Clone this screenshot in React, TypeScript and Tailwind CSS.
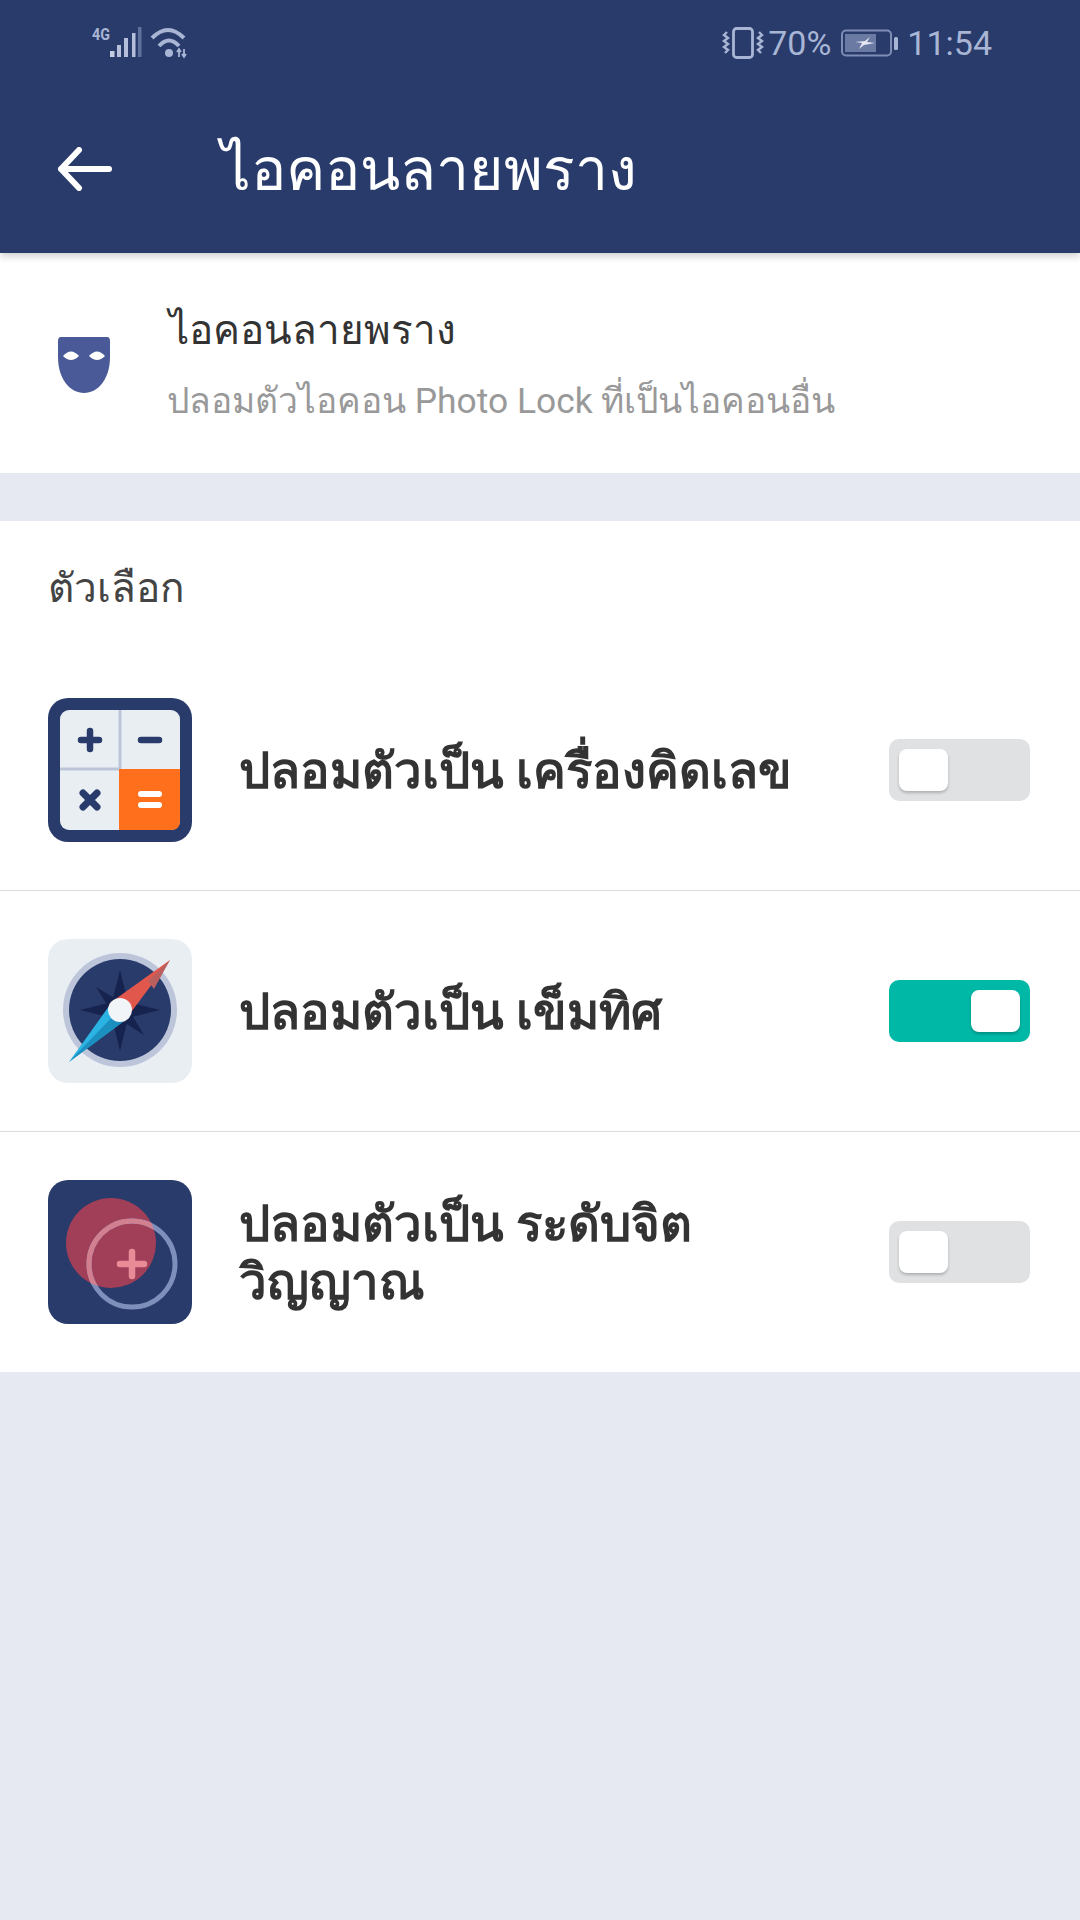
import React from "react";

const NAVY = "#283b6b";

function SignalIcon() {
  return (
    <svg width="100" height="36" viewBox="0 0 100 36" fill="none">
      <text x="0" y="15" fill="#a9b5d4" fontSize="16" fontWeight="700" fontFamily="'Liberation Sans Narrow','Roboto',sans-serif" textLength="18" lengthAdjust="spacingAndGlyphs">4G</text>
      <rect x="18" y="26" width="4.500" height="6" fill="#c3cce2" />
      <rect x="25" y="20" width="4" height="12" fill="#b5bfdb" />
      <rect x="32" y="13" width="4" height="19" fill="#b5bfdb" />
      <rect x="40" y="8" width="3.500" height="24" fill="#b5bfdb" />
      <rect x="46" y="2" width="3.500" height="30" fill="#5f709c" />
      <path d="M60 13 Q76 -3 92 13" stroke="#a9b5d4" strokeWidth="4" />
      <path d="M67 21 Q77 10 87 21" stroke="#a9b5d4" strokeWidth="4" />
      <circle cx="77" cy="28" r="4" fill="#a9b5d4" />
      <path d="M87 32V24M85 27l2-3 2 3M92 24v8M90 29l2 3 2-3" stroke="#a9b5d4" strokeWidth="1.800" />
    </svg>
  );
}

function VibrateIcon() {
  return (
    <svg width="42" height="32" viewBox="0 0 42 32" fill="none" stroke="#a9b5d4">
      <rect x="11.500" y="1.500" width="19" height="29" rx="3" strokeWidth="2.800" />
      <path d="M5 5l-3 3 4 3-4 3 4 3-4 3 4 3-3 3" strokeWidth="2.400" />
      <path d="M37 5l3 3-4 3 4 3-4 3 4 3-4 3 3 3" strokeWidth="2.400" />
    </svg>
  );
}

function BatteryIcon() {
  return (
    <svg width="58" height="28" viewBox="0 0 58 28" fill="none">
      <rect x="1" y="1.500" width="49" height="25" rx="4" stroke="#7f8db5" strokeWidth="2" />
      <rect x="4" y="5" width="31" height="18" fill="#6b7aa3" />
      <rect x="53" y="8" width="4" height="13" rx="1.500" fill="#a9b5d4" />
      <path d="M14 13l10-1 5-4-3 5 8 1-11 2-5 4 3-6z" fill="#e4e8f2" />
    </svg>
  );
}

function MaskIcon() {
  return (
    <svg width="54" height="56" viewBox="0 0 54 56" className="mt-[4px]">
      <path d="M4 0H50Q53 0 53 4V20C53 42 41 56 27 56C13 56 1 42 1 20V4Q1 0 4 0Z" fill="#4a5a99" />
      <path d="M6 19Q14 10 22 19Q14 27 6 19Z" fill="#fff" />
      <path d="M32 19Q40 10 48 19Q40 27 32 19Z" fill="#fff" />
    </svg>
  );
}

function CalculatorIcon() {
  return (
    <svg width="144" height="144" viewBox="0 0 144 144" fill="none">
      <rect width="144" height="144" rx="20" fill={NAVY} />
      <rect x="12" y="12" width="120" height="120" rx="9" fill="#e9eef3" />
      <path d="M71 71H132V123Q132 132 123 132H71Z" fill="#ff6f1c" />
      <path d="M72 12V71M12 71H71" stroke="#bcc5d8" strokeWidth="3" />
      <g stroke={NAVY} strokeLinecap="round" strokeWidth="6.500">
        <path d="M33 42H51M42 33V51M93 42H111" />
        <path d="M35 95L49 109M49 95L35 109" strokeWidth="7" />
      </g>
      <path d="M93 96H111M93 107H111" stroke="#fff" strokeLinecap="round" strokeWidth="6" />
    </svg>
  );
}

function CompassIcon() {
  return (
    <svg width="144" height="144" viewBox="0 0 144 144">
      <rect width="144" height="144" rx="20" fill="#e9eef3" />
      <circle cx="72" cy="71" r="57" fill="#bcc5da" />
      <circle cx="72" cy="71" r="51" fill={NAVY} />
      <path d="M72 31L80 63L112 71L80 79L72 112L64 79L32 71L64 63Z" fill="#17234f" />
      <path d="M48 48L78 66L96 96L66 77Z" fill="#17234f" />
      <path d="M122 21L78 80L62 64Z" fill="#e2574c" />
      <path d="M122 21L100 42L106 50Z" fill="#b9605f" />
      <path d="M21 123L64 63L80 79Z" fill="#2bb3e3" />
      <path d="M21 123L70 72L80 79Z" fill="#1b8fbf" />
      <circle cx="72" cy="71" r="12" fill="#f2f5f8" />
    </svg>
  );
}

function SpiritIcon() {
  return (
    <svg width="144" height="144" viewBox="0 0 144 144" fill="none">
      <defs>
        <clipPath id="red-disc">
          <circle cx="63" cy="63" r="45" />
        </clipPath>
      </defs>
      <rect width="144" height="144" rx="20" fill={NAVY} />
      <circle cx="63" cy="63" r="45" fill="#a13f58" />
      <circle cx="84" cy="84" r="43" stroke="#7f8fbb" strokeWidth="5" />
      <circle cx="84" cy="84" r="43" stroke="#d27f90" strokeWidth="5" clipPath="url(#red-disc)" />
      <path d="M72 84H96M84 72V96" stroke="#e98b97" strokeWidth="6.500" strokeLinecap="round" />
    </svg>
  );
}

function Toggle({ on }: { on?: boolean }) {
  return (
    <div
      className={`flex h-[62px] w-[141px] shrink-0 items-center rounded-[10px] px-[10px] ${
        on ? "justify-end bg-[#00b8a6]" : "justify-start bg-[#e0e1e3]"
      }`}
    >
      <div className="h-[42px] w-[49px] rounded-[8px] bg-white shadow-[0_2px_3px_rgba(0,0,0,0.22)]" />
    </div>
  );
}

function OptionRow({
  icon,
  label,
  on,
  divider,
}: {
  icon: React.ReactNode;
  label: React.ReactNode;
  on?: boolean;
  divider?: boolean;
}) {
  return (
    <div className={`flex items-center py-[48px] pl-[48px] pr-[50px] ${divider ? "border-b border-[#dcdcdc]" : ""}`}>
      <div className="h-[144px] w-[144px] shrink-0">{icon}</div>
      <div className="ml-[47px] flex-1 pt-[2px] text-[49.200px] font-bold leading-[58px] text-[#333333]">{label}</div>
      <Toggle on={on} />
    </div>
  );
}

export default function App() {
  return (
    <div
      className="flex h-[1920px] w-[1080px] flex-col overflow-hidden bg-[#e6e9f2]"
      style={{ fontFamily: "Roboto, 'Noto Sans', 'DejaVu Sans', sans-serif" }}
    >
      <header className="relative z-10 h-[253px] shrink-0 bg-[#283b6b] shadow-[0_3px_8px_rgba(0,0,0,0.2)]">
        <div className="flex h-[85px] items-center justify-between pl-[92px] pr-[88px]">
          <SignalIcon />
          <div className="flex items-center text-[34px] leading-none text-[#a9b5d4]">
            <VibrateIcon />
            <span className="ml-[4px]">70%</span>
            <span className="ml-[10px]">
              <BatteryIcon />
            </span>
            <span className="ml-[8px]">11:54</span>
          </div>
        </div>
        <div className="flex h-[168px] items-center pl-[57px]">
          <svg width="56" height="44" viewBox="0 0 56 44" fill="none" stroke="#fff" strokeWidth="6" strokeLinecap="round" strokeLinejoin="round">
            <path d="M52 22H4M22 3L4 22L22 41" />
          </svg>
          <h1 className="ml-[108px] text-[59px] font-normal leading-none text-white">ไอคอนลายพราง</h1>
        </div>
      </header>

      <section className="flex h-[220px] shrink-0 items-center bg-white pl-[57px]">
        <MaskIcon />
        <div className="ml-[56px]">
          <div className="pl-[2px] text-[40.400px] leading-[56px] text-[#333333]">ไอคอนลายพราง</div>
          <div className="mt-[19px] text-[35.400px] leading-[46px] text-[#999999]">ปลอมตัวไอคอน Photo Lock ที่เป็นไอคอนอื่น</div>
        </div>
      </section>

      <section className="mt-[48px] bg-white">
        <div className="h-[129px] pl-[48px] pt-[31px] text-[40.500px] leading-[72px] text-[#444444]">ตัวเลือก</div>
        <OptionRow icon={<CalculatorIcon />} label="ปลอมตัวเป็น เครื่องคิดเลข" divider />
        <OptionRow icon={<CompassIcon />} label="ปลอมตัวเป็น เข็มทิศ" on divider />
        <OptionRow
          icon={<SpiritIcon />}
          label={
            <>
              ปลอมตัวเป็น ระดับจิต
              <br />
              วิญญาณ
            </>
          }
        />
      </section>
    </div>
  );
}
